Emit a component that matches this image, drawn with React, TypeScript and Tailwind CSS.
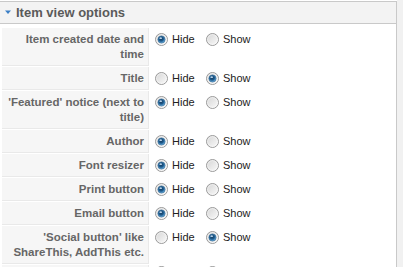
const rows: { label: string; show: boolean }[] = [
  { label: 'Item created date and time', show: false },
  { label: 'Title', show: true },
  { label: "'Featured' notice (next to title)", show: false },
  { label: 'Author', show: false },
  { label: 'Font resizer', show: false },
  { label: 'Print button', show: false },
  { label: 'Email button', show: false },
  { label: "'Social button' like ShareThis, AddThis etc.", show: true },
];

function Radio({ checked }: { checked: boolean }) {
  return (
    <svg width="13" height="13" viewBox="0 0 13 13" className="shrink-0">
      <defs>
        <linearGradient id="rbBg" x1="0" y1="0" x2="1" y2="1">
          <stop offset="0" stopColor="#d4d4d4" />
          <stop offset="1" stopColor="#fbfbfb" />
        </linearGradient>
        <radialGradient id="rbDot" cx="0.45" cy="0.4" r="0.6">
          <stop offset="0" stopColor="#153a5c" />
          <stop offset="0.55" stopColor="#1f5c8e" />
          <stop offset="1" stopColor="#6fb8ea" />
        </radialGradient>
      </defs>
      <circle cx="6.5" cy="6.5" r="6" fill="url(#rbBg)" stroke="#9a9a9a" strokeWidth="1" />
      <circle cx="6.5" cy="6.5" r="4.9" fill="none" stroke="#ffffff" strokeOpacity="0.6" strokeWidth="0.8" />
      {checked && (
        <>
          <circle cx="6.5" cy="6.5" r="3.6" fill="url(#rbDot)" stroke="#2a5f8c" strokeWidth="0.6" />
          <ellipse cx="5.7" cy="5.2" rx="1.3" ry="0.9" fill="#cfe9ff" fillOpacity="0.85" />
        </>
      )}
    </svg>
  );
}

function Option({ label, checked, wide }: { label?: string; checked: boolean; wide?: boolean }) {
  return (
    <label className={`flex items-start gap-[4px] ${wide ? 'w-[51px]' : ''}`}>
      <span className="pt-px">
        <Radio checked={checked} />
      </span>
      {label && <span className="text-[11px] leading-[15px] text-[#222]">{label}</span>}
    </label>
  );
}

function Row({ label, show, last }: { label: string; show: boolean; last?: boolean }) {
  return (
    <div className="mt-px flex">
      <div className="min-h-[23px] w-[147px] shrink-0 border-r border-b border-[#e9e9e9] bg-[#f6f6f6] pt-[4px] pr-[4px] pb-[3px] pl-[4px] text-right text-[11.5px] font-bold leading-[15px] text-[#666]">
        {label}
      </div>
      <div className={`ml-px flex pl-[5px] ${last ? 'pt-0' : 'pt-[4px]'}`}>
        <Option label={last ? undefined : 'Hide'} checked={!show} wide />
        <Option label={last ? undefined : 'Show'} checked={show} />
      </div>
    </div>
  );
}

export default function App() {
  return (
    <div className="flex h-[267px] w-[403px] overflow-hidden bg-white" style={{ fontFamily: '"Liberation Sans", Arial, sans-serif' }}>
      <div className="mt-px w-[397px] shrink-0 border-t border-r border-[#c9c9c9]">
        <div className="flex h-[22px] items-center border-b border-[#c9c9c9] bg-[#f3f3f3]">
          <svg width="16" height="8" viewBox="0 0 16 8" className="shrink-0">
            <path d="M5 1.5 L11 1.5 L8 5 Z" fill="#3b7fc6" />
          </svg>
          <span className="text-[13px] font-bold text-[#5a5a5a]">Item view options</span>
        </div>
        <div className="pt-[3px] pl-[2px]">
          {rows.map((r) => (
            <Row key={r.label} label={r.label} show={r.show} />
          ))}
          <Row label="" show={false} last />
        </div>
      </div>
      <div className="flex-1 bg-[#f1f1f1]" />
    </div>
  );
}
